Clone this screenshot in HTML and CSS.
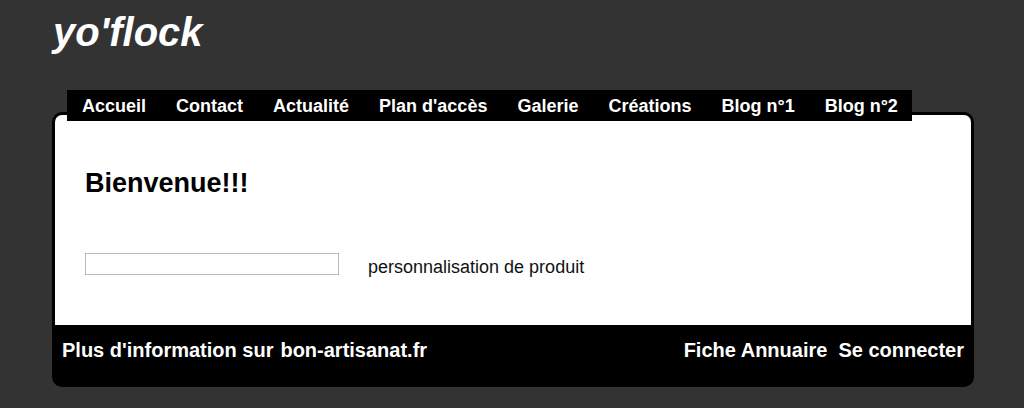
FILE: index.html
```html
<!DOCTYPE html>
<html lang="fr">
<head>
<meta charset="utf-8">
<title>yo'flock</title>
<link rel="stylesheet" href="styles.css">
</head>
<body>
<div class="page">
  <header class="site-header">
    <h1 class="logo">yo'flock</h1>
  </header>
  <nav class="menu">
    <a href="#">Accueil</a>
    <a href="#">Contact</a>
    <a href="#">Actualité</a>
    <a href="#">Plan d'accès</a>
    <a href="#">Galerie</a>
    <a href="#">Créations</a>
    <a href="#">Blog n°1</a>
    <a href="#">Blog n°2</a>
  </nav>
  <div class="box">
    <main class="content">
      <h2 class="title">Bienvenue!!!</h2>
      <div class="row">
        <div class="field"></div>
        <p class="desc">personnalisation de produit</p>
      </div>
    </main>
    <footer class="foot">
      <div class="foot-left"><span>Plus d'information sur</span><a href="#">bon-artisanat.fr</a></div>
      <div class="foot-right"><a href="#">Fiche Annuaire</a><a href="#">Se connecter</a></div>
    </footer>
  </div>
</div>
</body>
</html>
```

FILE: styles.css
```css
* { box-sizing: border-box; }
html, body {
  margin: 0;
  padding: 0;
  background: #333333;
  font-family: "Liberation Sans", Arial, sans-serif;
}
.page {
  width: 922px;
  margin-left: 52px;
}
.site-header {
  padding-top: 9px;
  height: 90px;
}
.logo {
  margin: 0;
  padding-left: 1px;
  font-size: 40px;
  line-height: 46px;
  font-weight: bold;
  font-style: italic;
  color: #ffffff;
}
.menu {
  position: relative;
  z-index: 1;
  display: inline-flex;
  margin-left: 15px;
  background: #000;
  height: 31px;
  padding-top: 2px;
}
.menu a {
  display: block;
  padding: 0 15px;
  line-height: 29px;
  font-size: 18px;
  font-weight: bold;
  color: #fff;
  text-decoration: none;
}
.menu a:last-child { padding-right: 14px; }
.box {
  margin-top: -9px;
  border: 3px solid #000;
  border-radius: 10px;
  background: #000;
  overflow: hidden;
}
.content {
  background: #fff;
  padding: 53px 30px 48px;
  height: 210px;
}
.title {
  margin: 0;
  font-size: 27px;
  line-height: 31px;
  font-weight: bold;
  color: #000;
}
.row {
  display: flex;
  align-items: flex-start;
  gap: 29px;
  margin-top: 54px;
}
.field {
  width: 254px;
  height: 22px;
  border: 1px solid #bbbbbb;
  background: #fff;
}
.desc {
  margin: 0;
  padding-top: 4px;
  font-size: 18px;
  line-height: 21px;
  color: #111;
}
.foot {
  display: flex;
  justify-content: space-between;
  padding: 14px 7px 22px;
  background: #000;
  color: #fff;
  font-size: 20px;
  font-weight: bold;
  line-height: 23px;
}
.foot a { color: #fff; text-decoration: none; }
.foot-left { display: flex; gap: 7px; }
.foot-right { display: flex; gap: 11px; }
```
